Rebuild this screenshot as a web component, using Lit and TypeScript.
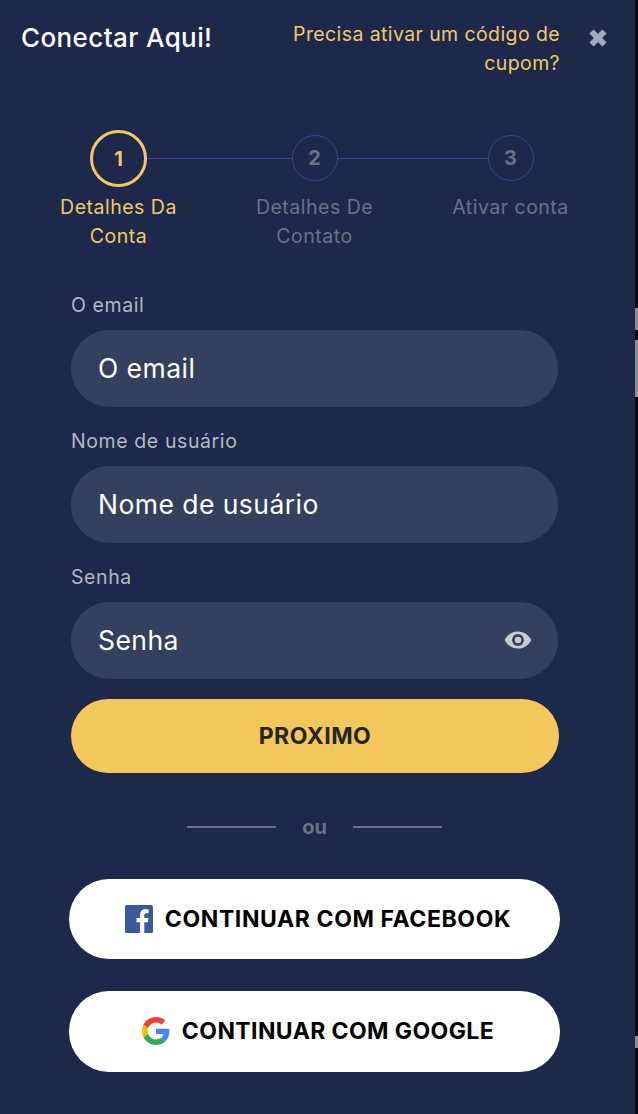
import { LitElement, css, html } from "lit";
import { customElement } from "lit/decorators.js";

const steps = [
  { n: "1", label: "Detalhes Da Conta", active: true },
  { n: "2", label: "Detalhes De Contato", active: false },
  { n: "3", label: "Ativar conta", active: false },
];

const fields = [
  { label: "O email", eye: false },
  { label: "Nome de usuário", eye: false },
  { label: "Senha", eye: true },
];

@customElement("app-root")
export class AppRoot extends LitElement {
  static styles = css`
    :host {
      display: block;
      width: 638px;
      height: 1114px;
      background: #0b0b14;
      font-family: Inter, "Liberation Sans", sans-serif;
      overflow: hidden;
      position: relative;
    }
    .panel {
      width: 635px;
      height: 1114px;
      background: #1d284b;
      box-sizing: border-box;
    }
    /* bits of the page behind the modal, showing at the right edge */
    .edge {
      position: absolute;
      left: 635px;
      width: 3px;
      background: #8f8f8c;
    }
    .edge.a {
      top: 308px;
      height: 22px;
    }
    .edge.b {
      top: 340px;
      height: 57px;
    }
    .edge.c {
      top: 1036px;
      height: 12px;
    }
    .head {
      display: flex;
      align-items: flex-start;
      padding: 21px 28px 0 21px;
      height: 130px;
      box-sizing: border-box;
    }
    .title {
      color: #fff;
      font-size: 26px;
      font-weight: 500;
      letter-spacing: 0.4px;
      line-height: 34px;
      flex: 1;
    }
    .coupon {
      width: 290px;
      color: #f1c869;
      font-size: 19.5px;
      letter-spacing: 0.4px;
      line-height: 29px;
      text-align: right;
      margin-top: -1px;
    }
    .close {
      width: 18px;
      height: 18px;
      margin: 8px 0 0 29px;
      flex: none;
    }
    .steps {
      display: grid;
      grid-template-columns: repeat(3, 196px);
      margin-left: 20.5px;
    }
    .step {
      display: flex;
      flex-direction: column;
      align-items: center;
      text-align: center;
      position: relative;
    }
    .line {
      position: absolute;
      top: 28px;
      left: 50%;
      width: 196px;
      height: 1px;
      background: #34498f;
    }
    .dot {
      width: 46px;
      height: 46px;
      margin: 5px 0 4px;
      box-sizing: border-box;
      border: 1px solid #34498f;
      border-radius: 50%;
      display: flex;
      align-items: center;
      justify-content: center;
      color: #6b7284;
      font-weight: 700;
      font-size: 20px;
      background: #1d284b;
      position: relative;
    }
    .step.on .dot {
      width: 57px;
      height: 57px;
      margin: 0 0 -2px;
      border: 3px solid #f1c869;
      color: #f1c869;
    }
    .step-label {
      width: 130px;
      font-size: 19.5px;
      letter-spacing: 0.5px;
      line-height: 29px;
      color: #6b7284;
      margin-top: 8px;
    }
    .step.on .step-label {
      color: #f1c869;
    }
    .form {
      display: flex;
      flex-direction: column;
      margin: 0 77px 0 71px;
      padding-top: 42px;
    }
    .field-label {
      color: #b4b8c4;
      font-size: 19.5px;
      letter-spacing: 0.6px;
      line-height: 24px;
      margin-bottom: 13px;
    }
    .input {
      height: 76.5px;
      border-radius: 38px;
      background: #353f5e;
      color: #fff;
      font-size: 26.5px;
      letter-spacing: 0.45px;
      display: flex;
      align-items: center;
      justify-content: space-between;
      padding: 0 26px 0 27px;
      margin-bottom: 22.5px;
    }
    .eye {
      width: 28px;
      height: 20px;
    }
    .next {
      height: 74px;
      margin: -2.5px -1px 0 0;
      border-radius: 37px;
      background: #f2c75c;
      color: #262622;
      font-size: 23px;
      font-weight: 700;
      letter-spacing: 0.5px;
      display: flex;
      align-items: center;
      justify-content: center;
    }
    .or {
      display: flex;
      align-items: center;
      justify-content: center;
      gap: 26px;
      color: #6b7284;
      font-size: 20px;
      font-weight: 700;
      height: 26px;
      margin: 41px 0 39px;
    }
    .or i {
      display: block;
      width: 89px;
      height: 2px;
      background: #6b7284;
    }
    .social {
      display: flex;
      flex-direction: column;
      gap: 32px;
      margin: 0 75px 0 69px;
    }
    .btn {
      height: 80.5px;
      border-radius: 40px;
      background: #fff;
      color: #000;
      font-size: 23px;
      font-weight: 700;
      letter-spacing: 0.6px;
      display: flex;
      align-items: center;
      justify-content: center;
      gap: 12px;
      padding-left: 7px;
    }
    .btn.google {
      letter-spacing: 0.4px;
    }
    .btn svg {
      width: 28px;
      height: 28px;
      flex: none;
    }
  `;

  render() {
    return html`
      <div class="panel">
        <div class="head">
          <div class="title">Conectar Aqui!</div>
          <div class="coupon">Precisa ativar um código de cupom?</div>
          <svg class="close" viewBox="0 0 18 18">
            <path d="M2.5 2.5l13 13M15.5 2.5l-13 13" stroke="#a4a9b7" stroke-width="6" />
          </svg>
        </div>
        <div class="steps">
          ${steps.map(
            (s, i) => html`
              <div class="step ${s.active ? "on" : ""}">
                ${i < 2 ? html`<div class="line"></div>` : ""}
                <div class="dot">${s.n}</div>
                <div class="step-label">${s.label}</div>
              </div>
            `
          )}
        </div>
        <div class="form">
          ${fields.map(
            (f) => html`
              <div class="field-label">${f.label}</div>
              <div class="input">
                <span>${f.label}</span>
                ${f.eye
                  ? html`<svg class="eye" viewBox="0 0 26 18">
                      <path d="M13 1C7.5 1 3 4.3.6 9 3 13.7 7.5 17 13 17s10-3.300 12.400-8C23 4.300 18.500 1 13 1z" fill="#c9cbd1" />
                      <circle cx="13" cy="9" r="5.5" fill="#353f5e" />
                      <circle cx="13" cy="9" r="3" fill="#c9cbd1" />
                    </svg>`
                  : ""}
              </div>
            `
          )}
          <div class="next">PROXIMO</div>
          <div class="or"><i></i><span>ou</span><i></i></div>
        </div>
        <div class="social">
          <div class="btn">
            <svg viewBox="0 0 28 28">
              <rect width="28" height="28" rx="1.5" fill="#3b5998" />
              <path d="M19.3 28V17.2h3.600l.5-4.200h-4.100v-2.700c0-1.200.3-2 2.100-2h2.200V4.500c-.4 0-1.700-.2-3.200-.2-3.200 0-5.300 1.900-5.300 5.500V13h-3.600v4.200h3.600V28z" fill="#fff" />
            </svg>
            CONTINUAR COM FACEBOOK
          </div>
          <div class="btn google">
            <svg viewBox="0 0 48 48">
              <path fill="#EA4335" d="M24 9.5c3.500 0 6.700 1.200 9.200 3.600l6.900-6.900C35.900 2.400 30.500 0 24 0 14.600 0 6.500 5.400 2.600 13.200l8 6.200C12.400 13.700 17.700 9.500 24 9.500z" />
              <path fill="#4285F4" d="M47 24.500c0-1.600-.1-3.100-.4-4.500H24v9h12.900c-.6 3-2.200 5.500-4.800 7.200l7.700 6c4.500-4.200 7.200-10.300 7.200-17.700z" />
              <path fill="#FBBC05" d="M10.500 28.600c-.5-1.400-.8-3-.8-4.600s.3-3.200.8-4.600l-8-6.200C.9 16.500 0 20.100 0 24s.9 7.500 2.600 10.800l7.900-6.200z" />
              <path fill="#34A853" d="M24 48c6.500 0 11.900-2.100 15.900-5.800l-7.700-6c-2.200 1.400-4.900 2.300-8.200 2.300-6.300 0-11.600-4.200-13.500-9.900l-8 6.200C6.500 42.600 14.600 48 24 48z" />
            </svg>
            CONTINUAR COM GOOGLE
          </div>
        </div>
      </div>
      <div class="edge a"></div>
      <div class="edge b"></div>
      <div class="edge c"></div>
    `;
  }
}
